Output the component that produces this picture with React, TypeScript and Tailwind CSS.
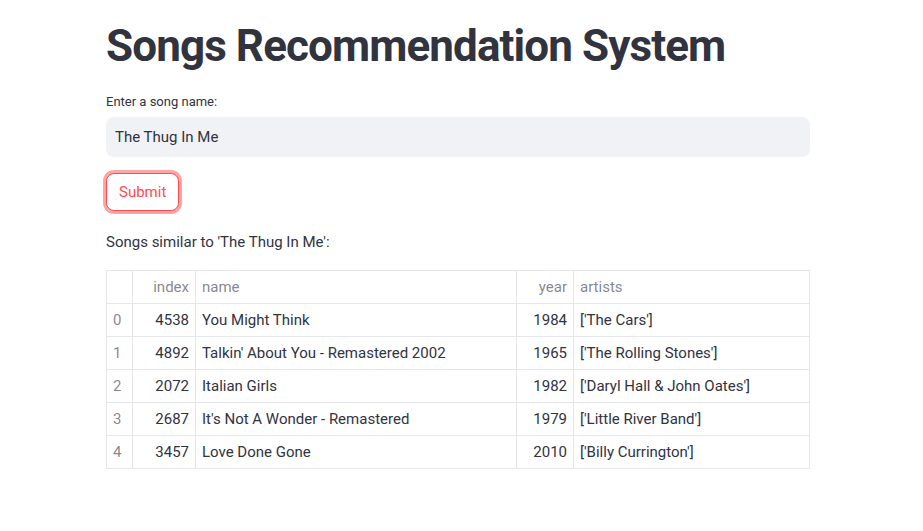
import React from 'react';

const rows = [
  { i: 0, index: 4538, name: 'You Might Think', year: 1984, artists: "['The Cars']" },
  { i: 1, index: 4892, name: "Talkin' About You - Remastered 2002", year: 1965, artists: "['The Rolling Stones']" },
  { i: 2, index: 2072, name: 'Italian Girls', year: 1982, artists: "['Daryl Hall & John Oates']" },
  { i: 3, index: 2687, name: "It's Not A Wonder - Remastered", year: 1979, artists: "['Little River Band']" },
  { i: 4, index: 3457, name: 'Love Done Gone', year: 2010, artists: "['Billy Currington']" },
];

const App = () => {
  return (
    <div className="min-h-screen bg-white text-[#31333f] [font-family:Roboto,'Liberation_Sans',sans-serif]">
      <div className="ml-[106px] w-[704px] pt-[20px]">
        <h1 className="text-[44px] font-bold leading-[52px] tracking-[-0.9px] text-[#31333f]">
          Songs Recommendation System
        </h1>

        <div className="mt-[21px]">
          <label className="block text-[13px] leading-[18px] mb-[6px]">Enter a song name:</label>
          <div className="h-[40px] rounded-lg bg-[#f0f2f6] flex items-center px-[9px] text-[15px]">
            The Thug In Me
          </div>
        </div>

        <div className="mt-[16px]">
          <button className="h-[38px] px-[12px] rounded-lg border border-[#ff4b4b] bg-white text-[#ff4b4b] text-[15px] shadow-[0_0_0_3px_rgba(255,75,75,0.5)]">
            Submit
          </button>
        </div>

        <p className="mt-[19px] text-[15px] leading-[24px]">Songs similar to 'The Thug In Me':</p>

        <table className="mt-[16px] w-full border-collapse text-[15px] leading-[20px]">
          <thead>
            <tr className="h-[33px] text-[rgba(49,51,63,0.6)]">
              <th className="w-[26px] border border-[#e6e7ea] font-normal"></th>
              <th className="w-[63px] border border-[#e6e7ea] font-normal text-right px-[6px]">index</th>
              <th className="w-[321px] border border-[#e6e7ea] font-normal text-left px-[6px]">name</th>
              <th className="w-[57px] border border-[#e6e7ea] font-normal text-right px-[6px]">year</th>
              <th className="border border-[#e6e7ea] font-normal text-left px-[6px]">artists</th>
            </tr>
          </thead>
          <tbody>
            {rows.map((r) => (
              <tr key={r.i} className="h-[33px]">
                <td className="border border-[#e6e7ea] px-[6px] text-[rgba(49,51,63,0.6)]">{r.i}</td>
                <td className="border border-[#e6e7ea] px-[6px] text-right">{r.index}</td>
                <td className="border border-[#e6e7ea] px-[6px]">{r.name}</td>
                <td className="border border-[#e6e7ea] px-[6px] text-right">{r.year}</td>
                <td className="border border-[#e6e7ea] px-[6px]">{r.artists}</td>
              </tr>
            ))}
          </tbody>
        </table>
      </div>
    </div>
  );
};

export default App;
